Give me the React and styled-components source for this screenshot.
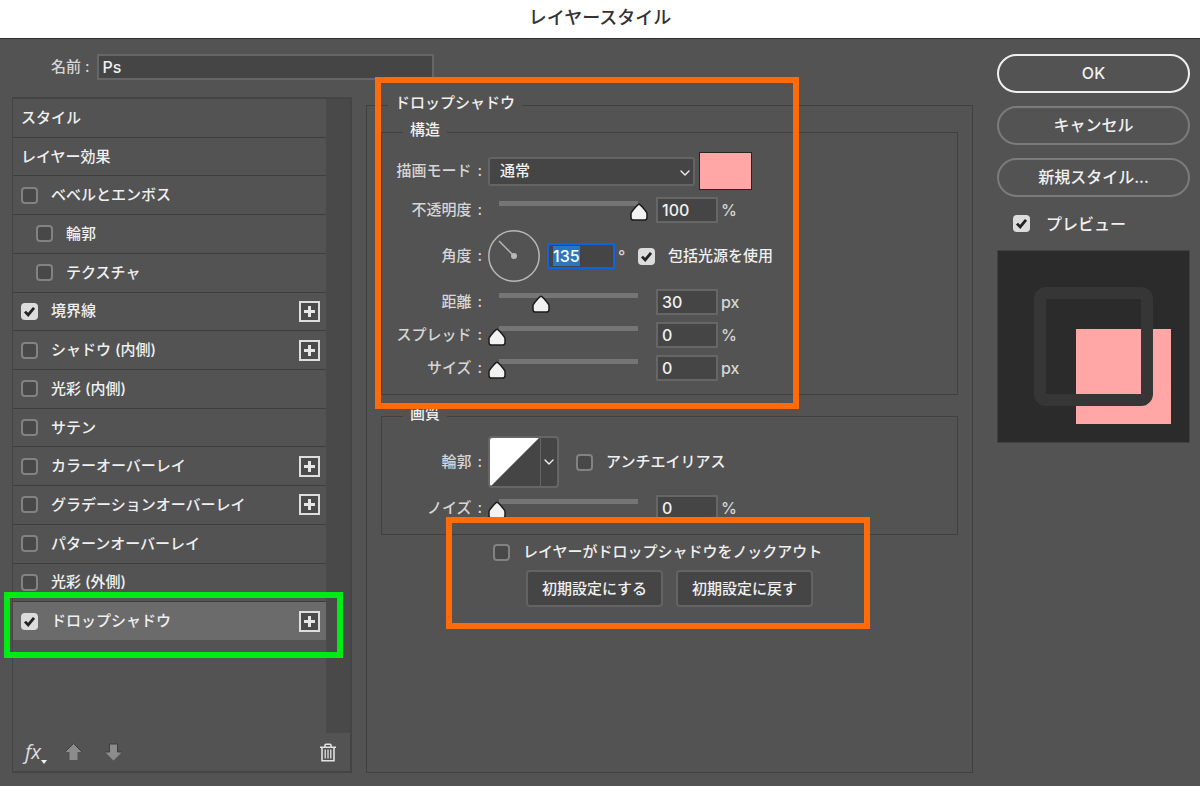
import React, { useEffect, useRef, useState } from 'react';
import styled, { createGlobalStyle } from 'styled-components';
import { ChevronDown } from 'lucide-react';

const svgUrl = (w, h, body) =>
  `url("data:image/svg+xml,${encodeURIComponent(
    `<svg xmlns='http://www.w3.org/2000/svg' width='${w}' height='${h}' viewBox='0 0 ${w} ${h}'>${body}</svg>`
  )}")`;

const checkMark = svgUrl(
  17,
  17,
  "<path d='M4 8.6 7.2 12 13 4.9' fill='none' stroke='#222' stroke-width='2.8'/>"
);
const thumbShape = svgUrl(
  18,
  18,
  "<path d='M9 1.2 C10 1.2 17 8.6 17 10.6 V14.4 Q17 17 14.4 17 H3.6 Q1 17 1 14.4 V10.6 C1 8.6 8 1.2 9 1.2Z' fill='#f2f2f2' stroke='#1c1c1c' stroke-width='1.5'/>"
);

const GlobalStyle = createGlobalStyle`
  *, *::before, *::after { box-sizing: border-box; }
  body { margin: 0; background: #535353; }
  body, button, input, select {
    font-family: Inter, "Noto Sans CJK JP", sans-serif;
    font-size: 15px;
    line-height: 22px;
    font-weight: 500;
    color: #f0f0f0;
  }
`;

const Window = styled.div`
  min-height: 100vh;
  display: flex;
  flex-direction: column;
  background: #535353;
`;

const TitleBar = styled.header`
  height: 39px;
  flex: none;
  display: flex;
  align-items: center;
  justify-content: center;
  padding-bottom: 2px;
  background: #fff;
  border-bottom: 1px solid #2e2e2e;
`;

const Title = styled.h1`
  margin: 0;
  font-size: 18px;
  line-height: 24px;
  font-weight: 500;
  color: #333;
`;

const Body = styled.div`
  flex: 1;
  display: flex;
  gap: 24px;
  padding: 15px 10px 13px 12px;
`;

const Main = styled.main`
  flex: 1;
  min-width: 0;
  display: flex;
  flex-direction: column;
  gap: 14px;
`;

const NameRow = styled.div`
  display: flex;
  align-items: center;
  gap: 7px;
  padding-left: 39px;
  color: #d6d6d6;
`;

const TextBox = styled.input`
  height: 26px;
  width: ${(p) => p.$width}px;
  padding: 0 4px;
  border: 2px solid #666;
  border-radius: 0;
  background: #454545;
  font-size: 16px;
  outline: none;
  &:focus { border-color: #0f62e0; }
  &::selection { background: #2b77be; color: #fff; }
`;

const Columns = styled.div`
  flex: 1;
  display: flex;
  gap: 14px;
`;

const StylePanel = styled.section`
  position: relative;
  width: 340px;
  flex: none;
  margin-top: 3px;
  display: flex;
  flex-direction: column;
  border: 2px solid #444;
  border-left-width: 1px;
`;

const ListArea = styled.div`
  flex: 1;
  padding-right: 24px;
  background: linear-gradient(#494949, #494949) right / 24px 100% no-repeat;
`;

const StyleList = styled.ul`
  height: 542px;
  margin: 0;
  padding: 0;
  list-style: none;
  display: grid;
  grid-auto-rows: 1fr;
`;

const StyleRow = styled.li`
  display: flex;
  align-items: center;
  justify-content: space-between;
  padding: 0 6px 0 ${(p) => (p.$indent ? 23 : 8)}px;
  border-bottom: 1px solid ${(p) => (p.$active ? '#535353' : '#3e3e3e')};
  background: ${(p) => (p.$active ? '#6b6b6b' : '#535353')};
`;

const CheckLabel = styled.label`
  display: flex;
  align-items: center;
  gap: 13px;
`;

const CheckBox = styled.input.attrs({ type: 'checkbox' })`
  appearance: none;
  flex: none;
  width: 17px;
  height: 17px;
  margin: 0;
  border: 2px solid #828282;
  border-radius: 4px;
  background: #484848;
  &:checked {
    border: 0;
    background: #dcdcdc ${checkMark} center no-repeat;
  }
`;

const AddButton = styled.button`
  width: 21px;
  height: 21px;
  padding: 0;
  display: grid;
  place-items: center;
  border: 2px solid #dedede;
  background: #4b4b4b;
`;

const PanelFooter = styled.div`
  height: 38px;
  flex: none;
  display: flex;
  align-items: center;
  gap: 16px;
  padding: 0 13px 0 12px;
`;

const IconButton = styled.button`
  padding: 0;
  display: flex;
  border: 0;
  background: none;
  &:last-child { margin-left: auto; }
`;

const FxButton = styled(IconButton)`
  width: 24px;
  align-items: flex-end;
  font-family: "Open Sans", sans-serif;
  font-style: italic;
  font-weight: 400;
  font-size: 20px;
  line-height: 24px;
  color: #dedede;
`;

const SettingsPane = styled.div`
  position: relative;
  flex: 1;
  min-width: 0;
  display: flex;
`;

const Settings = styled.fieldset`
  flex: 1;
  min-width: 0;
  margin: 0;
  padding: 5px 14px;
  border: 1px solid #404040;
`;

const Group = styled.fieldset`
  min-width: 0;
  margin: 0 0 10px;
  padding: 9px 0 13px 1px;
  border: 1px solid #404040;
  &:last-of-type { margin-bottom: 6px; }
`;

const Legend = styled.legend`
  margin-left: ${(p) => p.$inset}px;
  padding: 0 7px 4px;
  line-height: 18px;
`;

const Fields = styled.div`
  display: flex;
  flex-direction: column;
  gap: 7px;
`;

const Field = styled.div`
  display: grid;
  grid-template-columns: 99px 1fr;
  align-items: center;
  gap: 6px;
`;

const FieldLabel = styled.label`
  text-align: right;
  white-space: nowrap;
  color: #d6d6d6;
`;

const Colon = styled.span`
  margin-left: 6px;
`;

const Controls = styled.div`
  display: flex;
  align-items: center;
  gap: ${(p) => p.$gap}px;
`;

const Unit = styled.span`
  min-width: 13px;
  font-size: 16px;
  color: #d6d6d6;
`;

const SelectWrap = styled.div`
  position: relative;
  svg {
    position: absolute;
    right: 2px;
    top: 8px;
    pointer-events: none;
  }
`;

const Select = styled.select`
  appearance: none;
  display: block;
  width: 207px;
  height: 29px;
  padding: 0 10px;
  border: 2px solid #646464;
  border-radius: 3px;
  background: #454545;
`;

const ColorSwatch = styled.button`
  width: 53px;
  height: 38px;
  padding: 0;
  border: 1px solid #262626;
  background: #ffa7a7;
`;

const Range = styled.input.attrs({ type: 'range' })`
  appearance: none;
  width: 160px;
  height: 22px;
  margin: 0;
  background: linear-gradient(#757575, #757575) 11px 2px / 139px 5px no-repeat;
  &::-webkit-slider-runnable-track { height: 22px; }
  &::-webkit-slider-thumb {
    appearance: none;
    width: 18px;
    height: 18px;
    margin-top: 4px;
    background: ${thumbShape};
  }
`;

const ContourButton = styled.button`
  width: 71px;
  height: 52px;
  padding: 0;
  display: flex;
  align-items: center;
  overflow: hidden;
  border: 2px solid #666;
  border-radius: 4px;
  background: #454545;
`;

const KnockoutArea = styled.div`
  padding-left: 112px;
  display: flex;
  flex-direction: column;
  gap: 7px;
`;

const DefaultButtons = styled.div`
  display: flex;
  gap: 13px;
  padding-left: 33px;
`;

const BoxButton = styled.button`
  width: 137px;
  height: 37px;
  padding: 0;
  border: 2px solid #636363;
  border-radius: 4px;
  background: #454545;
  white-space: nowrap;
`;

const Sidebar = styled.aside`
  width: 193px;
  flex: none;
  display: flex;
  flex-direction: column;
  gap: 13px;
`;

const PillButton = styled.button`
  height: 39px;
  padding: 0 0 2px;
  border: 2px solid ${(p) => (p.$primary ? '#f0f0f0' : '#7b7b7b')};
  border-radius: 20px;
  background: none;
  font-size: 16px;
`;

const PreviewToggle = styled(CheckLabel)`
  height: 27px;
  gap: 16px;
  padding-left: 16px;
  font-size: 16px;
`;

const Highlight = styled.div`
  position: absolute;
  z-index: 1;
  pointer-events: none;
  left: ${(p) => p.$left}px;
  top: ${(p) => p.$top}px;
  width: ${(p) => p.$width}px;
  height: ${(p) => p.$height}px;
  border: 6px solid ${(p) => p.$color};
`;

const effects = [
  { name: 'ベベルとエンボス' },
  { name: '輪郭', indent: true },
  { name: 'テクスチャ', indent: true },
  { name: '境界線', on: true, add: true },
  { name: 'シャドウ (内側)', add: true },
  { name: '光彩 (内側)' },
  { name: 'サテン' },
  { name: 'カラーオーバーレイ', add: true },
  { name: 'グラデーションオーバーレイ', add: true },
  { name: 'パターンオーバーレイ' },
  { name: '光彩 (外側)' },
  { name: 'ドロップシャドウ', on: true, add: true, active: true },
];

function Caption({ htmlFor, children }) {
  return (
    <FieldLabel htmlFor={htmlFor}>
      {children}
      <Colon>:</Colon>
    </FieldLabel>
  );
}

function SliderField({ id, label, value, max, unit }) {
  const [current, setCurrent] = useState(value);
  const update = (e) => setCurrent(Number(e.target.value) || 0);
  return (
    <Field>
      <Caption htmlFor={id}>{label}</Caption>
      <Controls $gap={8}>
        <Range aria-label={label} min={0} max={max} value={current} onChange={update} />
        <Controls $gap={3}>
          <TextBox id={id} $width={62} value={current} onChange={update} />
          <Unit>{unit}</Unit>
        </Controls>
      </Controls>
    </Field>
  );
}

function AngleField() {
  const ref = useRef(null);
  useEffect(() => {
    ref.current.focus();
    ref.current.select();
  }, []);
  return (
    <Field>
      <Caption htmlFor="angle">角度</Caption>
      <Controls $gap={7}>
        <svg width="52" height="52" viewBox="0 0 52 52" fill="none" stroke="#b8b8b8" aria-hidden="true">
          <circle cx="26" cy="26" r="25.2" strokeWidth="1.5" />
          <path d="M11 11 26 26" strokeWidth="1.5" />
          <circle cx="26" cy="26" r="3" fill="#b8b8b8" stroke="none" />
        </svg>
        <Controls $gap={3}>
          <TextBox id="angle" ref={ref} $width={68} defaultValue="135" />
          <Unit>°</Unit>
        </Controls>
        <CheckLabel>
          <CheckBox defaultChecked />
          包括光源を使用
        </CheckLabel>
      </Controls>
    </Field>
  );
}

const ArrowIcon = ({ down }) => (
  <svg width="24" height="18" viewBox="0 0 24 18" aria-hidden="true">
    <path
      d={down ? 'M4.5 1h8v8h4.5L8.5 17.5 0 9h4.5z' : 'M8.5 .5 17 9h-4.5v8h-8V9H0z'}
      fill="#8c8c8c"
    />
    <path
      d={down ? 'M0 9h4.5V1h8v8H17' : 'M0 9 8.5 .5 17 9'}
      fill="none"
      stroke="#3e3e3e"
    />
  </svg>
);

export default function App() {
  return (
    <>
      <GlobalStyle />
      <Window>
        <TitleBar>
          <Title>レイヤースタイル</Title>
        </TitleBar>
        <Body>
          <Main>
            <NameRow>
              <label htmlFor="style-name">名前 :</label>
              <TextBox id="style-name" $width={337} defaultValue="Ps" />
            </NameRow>
            <Columns>
              <StylePanel>
                <ListArea>
                  <StyleList>
                    <StyleRow>スタイル</StyleRow>
                    <StyleRow>レイヤー効果</StyleRow>
                    {effects.map((effect) => (
                      <StyleRow key={effect.name} $indent={effect.indent} $active={effect.active}>
                        <CheckLabel>
                          <CheckBox defaultChecked={effect.on} />
                          {effect.name}
                        </CheckLabel>
                        {effect.add && (
                          <AddButton aria-label={`${effect.name}を追加`}>
                            <svg width="11" height="11" viewBox="0 0 11 11">
                              <path d="M5.5 0v11M0 5.5h11" stroke="#e6e6e6" strokeWidth="3" />
                            </svg>
                          </AddButton>
                        )}
                      </StyleRow>
                    ))}
                  </StyleList>
                </ListArea>
                <PanelFooter>
                  <FxButton>
                    fx
                    <svg width="6" height="4" viewBox="0 0 6 4" aria-hidden="true">
                      <path d="M0 0h6L3 4z" fill="#f0f0f0" />
                    </svg>
                  </FxButton>
                  <IconButton aria-label="上へ">
                    <ArrowIcon />
                  </IconButton>
                  <IconButton aria-label="下へ">
                    <ArrowIcon down />
                  </IconButton>
                  <IconButton aria-label="削除">
                    <svg width="18" height="19" viewBox="0 0 18 19" fill="none" stroke="#e2e2e2" aria-hidden="true">
                      <path d="M1 4.2h16M6 3.8V2.2q0-1 1-1h4q1 0 1 1v1.6M3 4.5v13.3h12V4.5" strokeWidth="1.6" />
                      <path d="M6.2 6.5v9M9 6.5v9M11.8 6.5v9" strokeWidth="1.3" />
                    </svg>
                  </IconButton>
                </PanelFooter>
                <Highlight $color="#00eb14" $left={-9} $top={493} $width={339} $height={66} />
              </StylePanel>

              <SettingsPane>
                <Settings>
                  <Legend $inset={7}>ドロップシャドウ</Legend>
                  <Group>
                    <Legend $inset={20}>構造</Legend>
                    <Fields>
                      <Field>
                        <Caption htmlFor="blend">描画モード</Caption>
                        <Controls $gap={4}>
                          <SelectWrap>
                            <Select id="blend">
                              <option>通常</option>
                            </Select>
                            <ChevronDown size={16} />
                          </SelectWrap>
                          <ColorSwatch aria-label="シャドウのカラー" />
                        </Controls>
                      </Field>
                      <SliderField id="opacity" label="不透明度" value={100} max={100} unit="%" />
                      <AngleField />
                      <SliderField id="distance" label="距離" value={30} max={97} unit="px" />
                      <SliderField id="spread" label="スプレッド" value={0} max={100} unit="%" />
                      <SliderField id="size" label="サイズ" value={0} max={250} unit="px" />
                    </Fields>
                  </Group>
                  <Group>
                    <Legend $inset={20}>画質</Legend>
                    <Fields>
                      <Field>
                        <Caption htmlFor="contour">輪郭</Caption>
                        <Controls $gap={17}>
                          <ContourButton id="contour">
                            <svg width="51" height="50" viewBox="0 0 51 50" aria-hidden="true">
                              <path d="M0 0h50L0 50z" fill="#fff" />
                              <path d="M50.5 0v50" stroke="#666" />
                            </svg>
                            <ChevronDown size={16} />
                          </ContourButton>
                          <CheckLabel>
                            <CheckBox />
                            アンチエイリアス
                          </CheckLabel>
                        </Controls>
                      </Field>
                      <SliderField id="noise" label="ノイズ" value={0} max={100} unit="%" />
                    </Fields>
                  </Group>
                  <KnockoutArea>
                    <CheckLabel>
                      <CheckBox />
                      レイヤーがドロップシャドウをノックアウト
                    </CheckLabel>
                    <DefaultButtons>
                      <BoxButton>初期設定にする</BoxButton>
                      <BoxButton>初期設定に戻す</BoxButton>
                    </DefaultButtons>
                  </KnockoutArea>
                </Settings>
                <Highlight $color="#ff6a0a" $left={9} $top={-17} $width={424} $height={332} />
                <Highlight $color="#ff6a0a" $left={80} $top={423} $width={424} $height={112} />
              </SettingsPane>
            </Columns>
          </Main>

          <Sidebar>
            <PillButton $primary>OK</PillButton>
            <PillButton>キャンセル</PillButton>
            <PillButton>新規スタイル...</PillButton>
            <PreviewToggle>
              <CheckBox defaultChecked />
              プレビュー
            </PreviewToggle>
            <svg width="193" height="193" viewBox="0 0 193 193" aria-hidden="true">
              <rect x="0.5" y="0.5" width="192" height="192" fill="#2b2b2b" stroke="#424242" />
              <rect x="79" y="79" width="95" height="95" fill="#ffa7a7" />
              <rect x="43" y="43" width="107" height="107" rx="6" fill="none" stroke="#363636" strokeWidth="12" />
            </svg>
          </Sidebar>
        </Body>
      </Window>
    </>
  );
}
